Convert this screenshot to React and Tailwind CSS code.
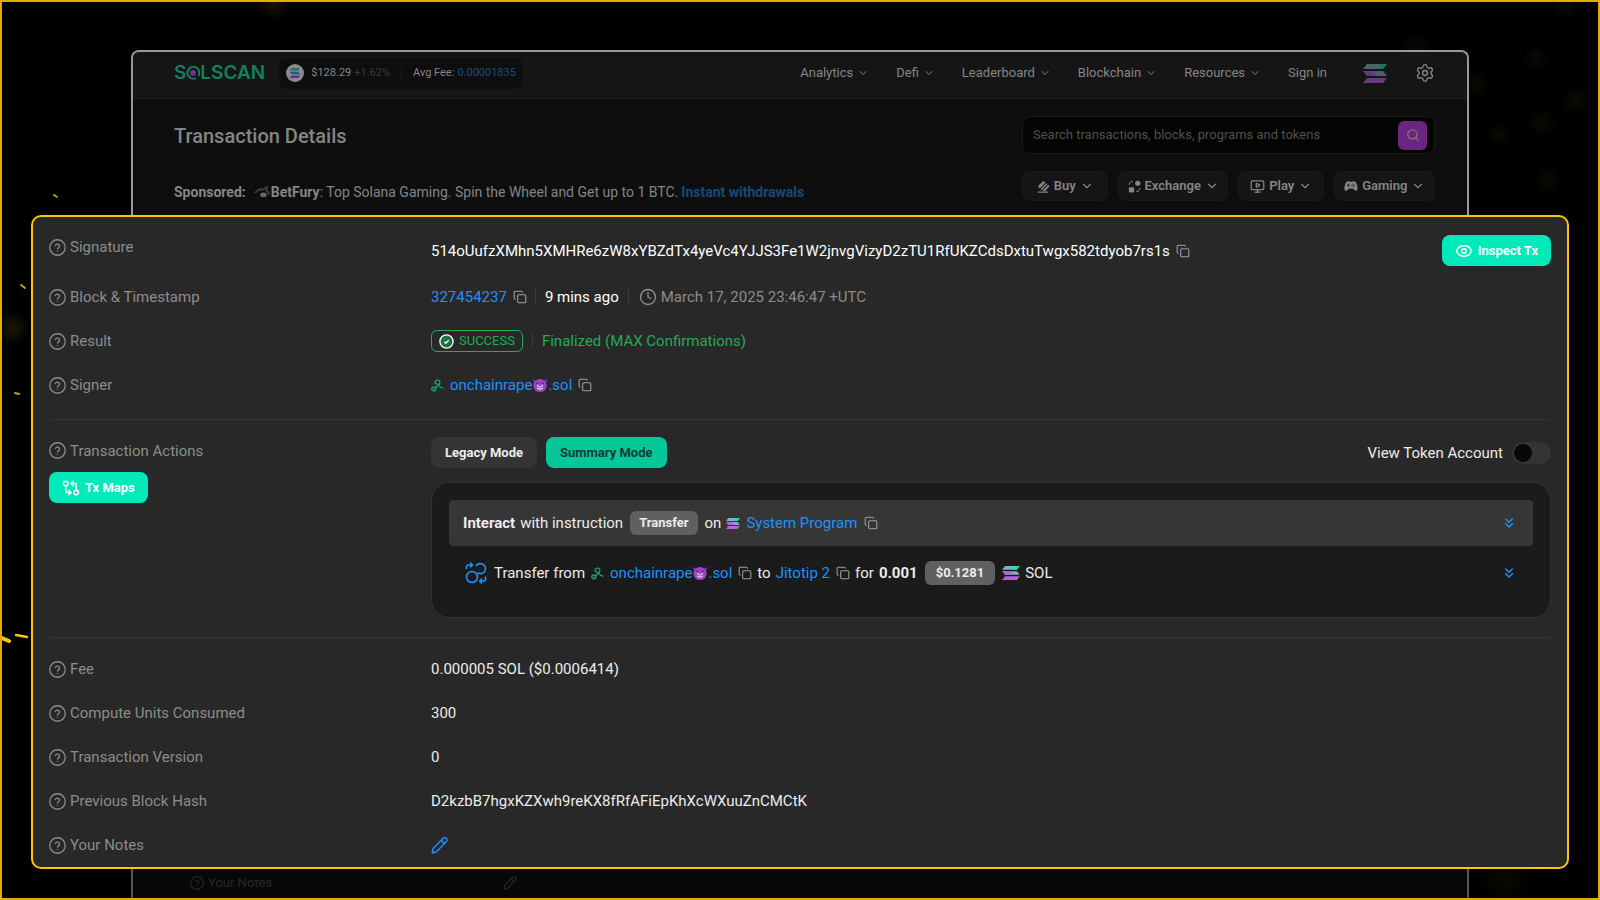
import { useState } from "react";
import {
  ChevronDown,
  ChevronsDown,
  Clock,
  Copy,
  Eye,
  GitCompareArrows,
  MonitorPlay,
  Search,
  Settings,
} from "lucide-react";
import { IoGameController } from "react-icons/io5";

const navItems = ["Analytics", "Defi", "Leaderboard", "Blockchain", "Resources"];

function HelpIcon({ className }) {
  return (
    <svg
      viewBox="1 1 22 22"
      fill="none"
      stroke="currentColor"
      strokeWidth="1.7"
      strokeLinecap="round"
      className={className}
    >
      <circle cx="12" cy="12" r="10" />
      <path d="M9.3 9.4a2.8 2.8 0 0 1 5.4.9c0 1.9-2.7 2.2-2.7 3.7M12 17h.01" />
    </svg>
  );
}

function PencilIcon({ className }) {
  return (
    <svg
      viewBox="0 0 16 16"
      fill="none"
      stroke="currentColor"
      strokeWidth="1.3"
      strokeLinecap="round"
      strokeLinejoin="round"
      className={className}
    >
      <path d="M11.2 1.4a2 2 0 0 1 3.3 2.8L5.2 13.9 1 15.2l1-4.4zM9.8 3.4l2.9 2.6" />
    </svg>
  );
}

function SolanaIcon({ className }) {
  return (
    <svg viewBox="0 0 24 19" className={className}>
      <path d="M4 0h20l-4 5H0z" fill="#7fb5bf" />
      <path d="M18 0h6l-4 5h-5z" fill="#14e0a0" />
      <path d="M0 7h20l4 5H4z" fill="#85a9bd" />
      <path d="M0 7h9l5 5H4z" fill="#b45fdc" />
      <path d="M4 14h20l-4 5H0z" fill="#b85fe0" />
    </svg>
  );
}

function DomainIcon() {
  return (
    <svg
      viewBox="0 0 13 13"
      fill="none"
      stroke="#14a37f"
      strokeWidth="1.3"
      strokeLinecap="round"
      className="h-[13px] w-[13px] shrink-0"
    >
      <path d="M4.2 4.8C3.2 2.6 5 .9 6.8 1.1c2 .2 2.700 2.300 1.500 3.900L5 8.500" />
      <path d="M7.600 6.300c1 1.800 2.200 2.700 4.400 2.800M5.200 4.400l1.300 1" />
      <circle cx="2.800" cy="10" r="2" />
      <path d="M2.800 10h.01" />
    </svg>
  );
}

function DevilIcon() {
  return (
    <svg viewBox="0 0 16 16" className="h-4 w-4 shrink-0">
      <path d="M.6 1.200c0 2.600.8 4 2.600 4.800l2.400-2.500C3.400 3.500 1.600 2.800.6 1.200z" fill="#6f2f9c" />
      <path d="M15.400 1.200c0 2.600-.8 4-2.600 4.800l-2.400-2.500c2.200 0 4-.7 5-2.300z" fill="#6f2f9c" />
      <circle cx="8" cy="8.500" r="6.600" fill="#9b45c4" />
      <path d="M4.400 5.900l2.500 1.500M11.600 5.900L9.100 7.400" stroke="#3c1559" strokeWidth="1" />
      <path d="M6 7.600v2.400M10 7.600v2.400M8 9v2" stroke="#e6d3f2" strokeWidth="1.200" />
      <path d="M5.200 11c1.700 1.400 3.900 1.400 5.600 0" stroke="#e6d3f2" strokeWidth="1.100" fill="none" />
    </svg>
  );
}

function SwapIcon() {
  return (
    <svg
      viewBox="0 0 22 22"
      fill="none"
      stroke="#1e90ff"
      strokeWidth="1.6"
      strokeLinecap="round"
      strokeLinejoin="round"
      className="h-[22px] w-[22px] shrink-0"
    >
      <circle cx="7" cy="15" r="5.5" />
      <path d="M1.5 6.5V5c0-1.3.8-2 2-2h4M5.6 1l2 2-2 2" />
      <path d="M11.2 3.500c3-3.500 9.300-1.600 9.300 3.200 0 3.700-4 5.900-7.400 4.400" />
      <path d="M20.5 15v2c0 1.300-.8 2-2 2h-4M16.500 17l-2 2 2 2" />
    </svg>
  );
}

function BuyIcon() {
  return (
    <svg viewBox="0 0 14 14" fill="currentColor" className="h-[13px] w-[13px]">
      <path d="M1 6.5L7 1l2 1.600L3 9.200zM3.800 10L9.800 3.400l1.300 1L5.200 11zM6 11.600L12 5l1.500 1.800L8.500 12zM1 12.400h11v1.200H1z" />
    </svg>
  );
}

function ExchangeIcon() {
  return (
    <svg viewBox="0 0 14 14" className="h-[13px] w-[13px]">
      <circle cx="10.5" cy="3.5" r="2.8" fill="currentColor" />
      <rect x="1" y="7.8" width="5.600" height="5.600" rx="1" fill="currentColor" />
      <path
        d="M1.500 5C1.500 3 3 1.500 5 1.500M9 12.500c2 0 3.500-1.500 3.500-3.500"
        fill="none"
        stroke="currentColor"
        strokeWidth="1.3"
        strokeDasharray="2.5 1"
      />
    </svg>
  );
}

function BetFuryIcon() {
  return (
    <svg viewBox="0 0 16 12" fill="none" className="h-3 w-4">
      <path d="M1 7c2-3 4-4 7-3l5-3-1 3c2 1 3 3 3 5" stroke="#444" strokeWidth="1.5" />
      <path d="M6 8c2-2 5-2 7 0l-1 3H7z" fill="#666" />
      <path d="M3 5l4-3" stroke="#444" />
    </svg>
  );
}

function Logo() {
  return (
    <a
      href="#home"
      aria-label="Solscan"
      className="flex items-center text-[19px] leading-6 font-semibold text-[#12805f] font-['Inter',sans-serif]"
    >
      <span>S</span>
      <svg viewBox="0 0 14 14" className="h-[14px] w-[14px]">
        <path d="M12.5 10A6 6 0 1 0 10 12.2" fill="none" stroke="#12805f" strokeWidth="2" />
        <circle cx="7" cy="7" r="3" fill="#7a2a8c" />
      </svg>
      <span>LSCAN</span>
    </a>
  );
}

function CopyButton() {
  return (
    <button type="button" aria-label="Copy" className="shrink-0 text-[#a0a0a0]">
      <Copy className="h-[14px] w-[14px]" strokeWidth={1.8} />
    </button>
  );
}

function Bar() {
  return <span className="h-4 w-px shrink-0 bg-[#3c3c3c]" />;
}

function DomainLink() {
  return (
    <a href="#account" className="mx-[6px] flex items-center text-[#1e90ff]">
      onchainrape
      <DevilIcon />
      .sol
    </a>
  );
}

function Row({ label, children, className = "h-6 items-center" }) {
  return (
    <div className={"flex " + className}>
      <dt className="flex h-6 w-[382px] shrink-0 items-center gap-1 text-[#8c8c8c]">
        <HelpIcon className="h-[17px] w-[17px]" />
        {label}
      </dt>
      <dd className="flex min-w-0 flex-1 items-center">{children}</dd>
    </div>
  );
}

function MenuButton({ icon, label }) {
  return (
    <button
      type="button"
      className="flex h-[30px] items-center justify-center gap-1 rounded-lg border border-[#1a1a1a] bg-[#151515] text-[13px] font-semibold"
    >
      {icon}
      {label}
      <ChevronDown className="h-[14px] w-[14px]" />
    </button>
  );
}

function Header() {
  return (
    <header className="flex h-[47px] shrink-0 items-center justify-between rounded-t-md border-b border-[#1b1b1b] bg-[#151515] pr-8 pb-1 pl-[41px] text-[13px]">
      <div className="flex items-center gap-[14px]">
        <Logo />
        <div className="flex h-[31px] items-center rounded-lg bg-[#0e0e0e] px-[7px] text-[11px]">
          <span className="mr-[7px] flex h-[18px] w-[18px] items-center justify-center rounded-full bg-[#8a8a8a]">
            <svg viewBox="0 0 10 10" className="h-[10px] w-[10px]">
              <path d="M1.5 0H10L8.5 2.5H0z" fill="#1d6f68" />
              <path d="M0 3.7h8.500L10 6.200H1.500z" fill="#2f4f86" />
              <path d="M1.500 7.500H10L8.500 10H0z" fill="#4b3f7c" />
            </svg>
          </span>
          <span>$128.29</span>
          <span className="ml-[3px] text-[#3d3b36]">+1.62%</span>
          <span className="mx-[11px] h-4 w-px bg-[#1c1c1c]" />
          <span>Avg Fee:</span>
          <a href="#fees" className="ml-[3px] text-[#175088]">
            0.00001835
          </a>
        </div>
      </div>
      <nav className="flex items-center">
        {navItems.map((item) => (
          <button key={item} type="button" className="mr-[27px] flex items-center gap-1">
            {item}
            <ChevronDown className="h-3 w-3" />
          </button>
        ))}
        <a href="#signin">Sign in</a>
        <SolanaIcon className="ml-9 h-[19px] w-6 opacity-50" />
        <button type="button" aria-label="Settings" className="ml-7">
          <Settings className="h-5 w-5" strokeWidth={1.6} />
        </button>
      </nav>
    </header>
  );
}

function SitePage() {
  return (
    <div className="mx-[129px] mt-12 flex flex-col rounded-t-lg border-2 border-b-0 border-[#999999] bg-[#0e0e0e] text-[#858585]">
      <Header />
      <div className="flex justify-between pr-8 pl-[41px]">
        <div className="pt-[25px]">
          <h1 className="text-[20px] leading-6 font-medium">Transaction Details</h1>
          <p className="mt-8 flex items-center text-[14px] leading-6 whitespace-pre">
            <b className="mr-[8px]">Sponsored:</b>
            <BetFuryIcon />
            <b className="ml-px">BetFury</b>: Top Solana Gaming. Spin the Wheel and Get up to 1 BTC.
            <a href="#withdrawals" className="ml-[3px] font-bold text-[#17497a]">
              Instant withdrawals
            </a>
          </p>
        </div>
        <div className="w-[413px] pt-[17px]">
          <form
            onSubmit={(event) => event.preventDefault()}
            className="flex h-[38px] items-center rounded-lg border border-[#1b1b1b] bg-[#040402] pr-[7px] pl-[10px]"
          >
            <input
              type="search"
              aria-label="Search"
              placeholder="Search transactions, blocks, programs and tokens"
              className="min-w-0 flex-1 text-[13px] outline-none placeholder:text-[#505050]"
            />
            <button
              type="submit"
              aria-label="Search"
              className="flex h-[29px] w-[29px] items-center justify-center rounded-md bg-[#692580]"
            >
              <Search className="h-[14px] w-[14px]" strokeWidth={1.8} />
            </button>
          </form>
          <div className="mt-[17px] grid grid-cols-[86fr_109fr_86fr_100fr] gap-[10px]">
            <MenuButton icon={<BuyIcon />} label="Buy" />
            <MenuButton icon={<ExchangeIcon />} label="Exchange" />
            <MenuButton icon={<MonitorPlay className="h-[15px] w-[15px]" />} label="Play" />
            <MenuButton icon={<IoGameController className="h-[14px] w-[14px]" />} label="Gaming" />
          </div>
        </div>
      </div>
      <div className="mt-auto flex h-[30px] items-center px-[57px] text-[13px] text-[#484848]">
        <span className="flex w-[313px] items-center gap-1">
          <HelpIcon className="h-[14px] w-[14px]" />
          Your Notes
        </span>
        <PencilIcon className="h-[14px] w-[14px]" />
      </div>
    </div>
  );
}

function TransactionActions() {
  const [mode, setMode] = useState("summary");
  const active = "bg-[#06c79a] text-[#143a30]";
  const idle = "bg-[#343434] text-[#ededed]";

  return (
    <section className="flex border-y border-[#353535] pt-[17px] pb-[19px]">
      <div className="w-[382px] shrink-0 text-[#8c8c8c]">
        <h2 className="flex h-[27px] items-center gap-1">
          <HelpIcon className="h-[17px] w-[17px]" />
          Transaction Actions
        </h2>
        <button
          type="button"
          className="mt-2 flex h-[31px] items-center gap-[5px] rounded-lg bg-[#02eaba] px-[13px] text-[13px] font-bold text-white"
        >
          <GitCompareArrows className="h-[18px] w-[18px]" />
          Tx Maps
        </button>
      </div>
      <div className="min-w-0 flex-1">
        <div className="flex h-[31px] items-center">
          <button
            type="button"
            onClick={() => setMode("legacy")}
            className={"h-[31px] rounded-lg px-[14px] text-[13px] font-bold " + (mode === "legacy" ? active : idle)}
          >
            Legacy Mode
          </button>
          <button
            type="button"
            onClick={() => setMode("summary")}
            className={"ml-[9px] h-[31px] rounded-lg px-[14px] text-[13px] font-bold " + (mode === "summary" ? active : idle)}
          >
            Summary Mode
          </button>
          <label className="ml-auto flex items-center gap-[9px]">
            View Token Account
            <input
              type="checkbox"
              role="switch"
              className="flex h-[22px] w-[39px] appearance-none items-center rounded-full bg-[#343434] px-[2px] before:h-[18px] before:w-[18px] before:rounded-full before:bg-[#080808] checked:bg-[#06c79a] checked:before:ml-auto"
            />
          </label>
        </div>
        <div className="mt-[14px] rounded-[18px] border border-[#303434] bg-[#1b1b1b] px-[17px] pt-[17px] pb-[21px]">
          <div className="flex h-[46px] items-center rounded-sm bg-[#363636] pr-4 pl-[14px]">
            <b className="mr-[5px]">Interact</b>
            with instruction
            <span className="mx-[7px] rounded-md bg-[#606060] px-[9px] text-[13px] leading-6 font-bold">
              Transfer
            </span>
            on
            <SolanaIcon className="mr-[6px] ml-[5px] h-[11px] w-[14px]" />
            <a href="#program" className="mr-[7px] text-[#1e90ff]">
              System Program
            </a>
            <CopyButton />
            <button type="button" aria-label="Expand" className="ml-auto text-[#1e90ff]">
              <ChevronsDown className="h-4 w-4" strokeWidth={2.2} />
            </button>
          </div>
          <div className="mt-1 flex h-[46px] items-center pr-4 pl-4">
            <SwapIcon />
            <span className="mr-[6px] ml-[7px]">Transfer from</span>
            <DomainIcon />
            <DomainLink />
            <CopyButton />
            <span className="mx-[5px]">to</span>
            <a href="#jito" className="mr-[6px] text-[#1e90ff]">
              Jitotip 2
            </a>
            <CopyButton />
            <span className="mx-[5px]">for</span>
            <b>0.001</b>
            <span className="mx-[7px] rounded-md bg-[#606060] px-[11px] text-[13px] leading-6 font-bold">
              $0.1281
            </span>
            <SolanaIcon className="mr-[5px] h-[14px] w-[18px]" />
            SOL
            <button type="button" aria-label="Expand" className="ml-auto text-[#1e90ff]">
              <ChevronsDown className="h-4 w-4" strokeWidth={2.2} />
            </button>
          </div>
        </div>
      </div>
    </section>
  );
}

function TransactionPanel() {
  return (
    <main className="z-10 col-start-1 row-start-1 mx-[29px] mt-[213px] mb-[29px] flex flex-col self-start rounded-[10px] border-2 border-[#fdc500] bg-[#282828] px-4 pt-[18px] pb-[10px] text-[15px] leading-6 text-[#ececec]">
      <dl className="mb-[22px] flex flex-col gap-5">
        <Row label="Signature" className="h-[30px] items-start">
          <div className="flex h-[31px] flex-1 items-center">
            <span className="mr-[6px] text-white">
              514oUufzXMhn5XMHRe6zW8xYBZdTx4yeVc4YJJS3Fe1W2jnvgVizyD2zTU1RfUKZCdsDxtuTwgx582tdyob7rs1s
            </span>
            <CopyButton />
            <button
              type="button"
              className="ml-auto flex h-[31px] items-center gap-[5px] rounded-lg bg-[#02eaba] px-[13px] text-[13px] font-bold text-white"
            >
              <Eye className="h-[18px] w-[18px]" />
              Inspect Tx
            </button>
          </div>
        </Row>
        <Row label="Block & Timestamp">
          <a href="#block" className="mr-[6px] text-[#1e90ff]">
            327454237
          </a>
          <CopyButton />
          <span className="w-2" />
          <Bar />
          <span className="mx-[9px] text-white">9 mins ago</span>
          <Bar />
          <span className="ml-[10px] flex items-center gap-1 text-[#8c8c8c]">
            <Clock className="h-[18px] w-[18px]" strokeWidth={1.8} />
            March 17, 2025 23:46:47 +UTC
          </span>
        </Row>
        <Row label="Result">
          <span className="mr-[9px] flex h-[22px] items-center gap-[5px] rounded-md border border-[#27a956] px-[7px] text-[13px] text-[#27a956]">
            <svg viewBox="0 0 15 15" className="h-[15px] w-[15px]" fill="none">
              <circle cx="7.5" cy="7.5" r="6.6" fill="#1e7045" stroke="#fff" strokeWidth="1.3" />
              <path d="M5.4 7.7l1.500 1.500 2.800-2.900" stroke="#fff" strokeWidth="1.3" />
            </svg>
            SUCCESS
          </span>
          <Bar />
          <span className="ml-[9px] text-[#27a956]">Finalized (MAX Confirmations)</span>
        </Row>
        <Row label="Signer">
          <DomainIcon />
          <DomainLink />
          <CopyButton />
        </Row>
      </dl>
      <TransactionActions />
      <dl className="mt-[19px] flex flex-col gap-5">
        <Row label="Fee">0.000005 SOL ($0.0006414)</Row>
        <Row label="Compute Units Consumed">300</Row>
        <Row label="Transaction Version">0</Row>
        <Row label="Previous Block Hash">D2kzbB7hgxKZXwh9reKX8fRfAFiEpKhXcWXuuZnCMCtK</Row>
        <Row label="Your Notes">
          <button type="button" aria-label="Edit notes" className="text-[#1e90ff]">
            <PencilIcon className="h-[17px] w-[17px]" />
          </button>
        </Row>
      </dl>
    </main>
  );
}

function Backdrop() {
  return (
    <div className="pointer-events-none absolute inset-0 overflow-hidden">
      <svg className="absolute top-0 left-0 h-[700px] w-[320px]" stroke="#fdc500" strokeLinecap="round">
        <defs>
          <radialGradient id="glow">
            <stop offset="0" stopColor="#1c1600" />
            <stop offset="1" stopColor="#000" />
          </radialGradient>
        </defs>
        <g stroke="none" fill="url(#glow)">
          <circle cx="271" cy="0" r="18" />
          <circle cx="10" cy="326" r="18" />
        </g>
        <path d="M52 193l3 2M19 283l4 3M13 391l4 1" strokeWidth="2" opacity=".8" />
        <path d="M0 636l7 3" strokeWidth="4" />
        <path d="M14 633l11 2" strokeWidth="2.4" />
      </svg>
      <svg className="absolute top-0 right-0 h-[240px] w-[250px]">
        <defs>
          <radialGradient id="haze">
            <stop offset="0" stopColor="#0b0a04" />
            <stop offset="1" stopColor="#000" />
          </radialGradient>
        </defs>
        <g fill="url(#haze)">
          <circle cx="68" cy="48" r="18" />
          <circle cx="217" cy="4" r="14" />
          <circle cx="188" cy="55" r="13" />
          <circle cx="127" cy="82" r="15" />
          <circle cx="228" cy="98" r="16" />
          <circle cx="194" cy="120" r="16" />
          <circle cx="150" cy="133" r="12" />
          <circle cx="200" cy="178" r="14" />
        </g>
      </svg>
      <div className="absolute right-[76px] bottom-[4px] h-8 w-8 rounded-full bg-[#1c1600] blur-md" />
    </div>
  );
}

export default function App() {
  return (
    <div className="relative grid min-h-screen grid-cols-[minmax(0,1fr)] border-2 border-[#e0ad00] bg-black font-['Roboto',sans-serif]">
      <Backdrop />
      <div className="z-0 col-start-1 row-start-1 grid">
        <SitePage />
      </div>
      <div className="z-0 col-start-1 row-start-1 h-8 self-end bg-black/45" />
      <TransactionPanel />
    </div>
  );
}
